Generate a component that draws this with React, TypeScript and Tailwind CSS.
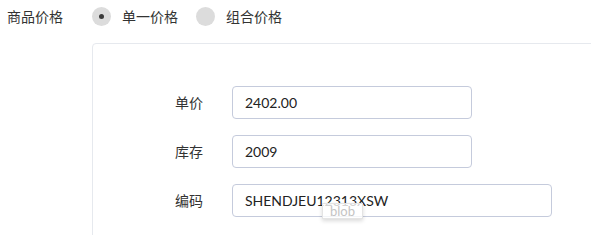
import React from "react";

const font = { fontFamily: 'Lato, "Noto Sans CJK SC", sans-serif' };

function Radio({ checked, label }: { checked?: boolean; label: string }) {
  return (
    <div className="flex items-center">
      <span className="flex h-[19px] w-[19px] items-center justify-center rounded-full bg-[#dcdcdc]">
        {checked && <span className="h-[5px] w-[5px] rounded-full bg-[#3a3a3a]" />}
      </span>
      <span className="ml-[11px] text-[14px] text-[#333]">{label}</span>
    </div>
  );
}

function Row({ label, value, wide }: { label: string; value: string; wide?: boolean }) {
  return (
    <div className="flex items-center">
      <div className="w-[110px] text-right text-[14px] text-[#333]">{label}</div>
      <div
        className={`ml-[29px] flex h-[33px] items-center rounded-[4px] border border-[#c5cbdc] bg-white pl-[12px] text-[14px] text-[#222] ${
          wide ? "w-[320px]" : "w-[240px]"
        }`}
      >
        {value}
      </div>
    </div>
  );
}

export default function App() {
  return (
    <div className="relative h-[235px] w-[591px] overflow-hidden bg-white" style={font}>
      <div className="flex h-[32px] items-center">
        <div className="ml-[7px] w-[85px] text-[14px] text-[#333]">商品价格</div>
        <Radio checked label="单一价格" />
        <div className="ml-[18px]">
          <Radio label="组合价格" />
        </div>
      </div>
      <div className="ml-[92px] mt-[11px] h-[220px] w-[520px] rounded-[4px] border border-[#e6e9ee] pt-[42px]">
        <div className="flex flex-col gap-[16px]">
          <Row label="单价" value="2402.00" />
          <Row label="库存" value="2009" />
          <Row label="编码" value="SHENDJEU12313XSW" wide />
        </div>
      </div>
      <div className="absolute left-[322px] top-[203px] flex h-[16px] w-[41px] items-center justify-center border border-[#e4e4e4] bg-white/80 text-[13px] leading-none text-[#c4c4c4] shadow-[0_2px_4px_rgba(0,0,0,0.15)]">
        blob
      </div>
    </div>
  );
}
